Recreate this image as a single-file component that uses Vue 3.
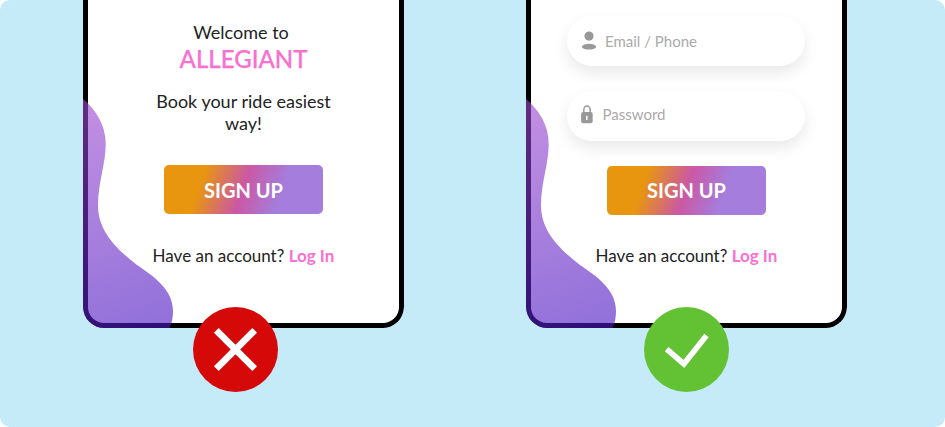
<script setup>
const phones = [
  { id: 'before', form: false, good: false },
  { id: 'after', form: true, good: true },
]
</script>

<template>
  <main class="board">
    <section v-for="phone in phones" :key="phone.id" class="column" :class="phone.id">
      <div class="phone">
        <div class="screen">
          <div v-if="!phone.form" class="intro">
            <p class="welcome">Welcome to</p>
            <h1 class="brand">ALLEGIANT</h1>
            <p class="tagline">Book your ride easiest<br />way!</p>
          </div>
          <div v-else class="fields">
            <div class="field email">
              <svg width="16" height="20" viewBox="0 0 16 20" fill="#999">
                <circle cx="8" cy="5.1" r="4.6" />
                <ellipse cx="8" cy="15.7" rx="7.2" ry="2.9" />
              </svg>
              <span>Email / Phone</span>
            </div>
            <div class="field password">
              <svg width="12" height="20" viewBox="0 0 12 20">
                <path d="M2.8 8V5a3.2 3.9 0 0 1 6.4 0V8" fill="none" stroke="#999" stroke-width="1.5" />
                <rect x="0.1" y="7" width="11.6" height="11.2" rx="2" fill="#999" />
                <path d="M5.1 10.8h1.5v4.2H5.1z" fill="#fff" />
              </svg>
              <span>Password</span>
            </div>
          </div>
          <button class="signup">SIGN UP</button>
          <p class="login">Have an account? <a>Log In</a></p>
        </div>
        <svg class="wave" width="92" height="230" viewBox="0 0 92 230">
          <defs>
            <linearGradient :id="'wave-' + phone.id" gradientUnits="userSpaceOnUse" x1="0" y1="10" x2="70" y2="230">
              <stop offset="0" stop-color="#9b48d0" />
              <stop offset="1" stop-color="#4c18c2" />
            </linearGradient>
          </defs>
          <path
            d="M0 1C13 12 22.7 27 22.7 46C22.7 66 15 85 15 107C15 132 31 149 54 167C70 178 90 191 90 213C90 219 89 225 86.5 230H0Z"
            :fill="'url(#wave-' + phone.id + ')'"
            fill-opacity="0.615"
          />
        </svg>
      </div>
      <svg class="badge" width="85" height="85" viewBox="0 0 85 85">
        <circle cx="42.5" cy="42.5" r="42.5" :fill="phone.good ? '#62c234' : '#d60909'" />
        <path v-if="phone.good" d="M22.7 42.2L39.9 57L62.5 28.6" fill="none" stroke="#fff" stroke-width="5.7" />
        <path v-else d="M23.3 23.3L61.7 61.7M61.7 23.3L23.3 61.7" fill="none" stroke="#fff" stroke-width="6.8" />
      </svg>
    </section>
  </main>
</template>

<style>
body {
  background: #fff;
}
</style>

<style scoped>
.board {
  box-sizing: border-box;
  width: 945px;
  height: 427px;
  padding-left: 83px;
  display: flex;
  gap: 122px;
  background: #c5eaf8;
  border-radius: 10px;
  overflow: hidden;
  font-family: Lato, sans-serif;
  color: #222;
}
.column {
  position: relative;
  width: 321px;
}
.phone {
  position: relative;
  height: 328px;
  overflow: hidden;
  border-radius: 0 0 21px 21px;
}
.screen {
  box-sizing: border-box;
  height: 328px;
  border: 5px solid #000;
  border-top: 0;
  border-radius: 0 0 21px 21px;
  background: #fff;
  display: flex;
  flex-direction: column;
  align-items: center;
}
p,
h1 {
  margin: 0;
}
.intro {
  box-sizing: border-box;
  height: 165px;
  padding-top: 21px;
  text-align: center;
}
.welcome {
  font-size: 18px;
  line-height: 22px;
  padding-right: 5px;
}
.brand {
  margin-top: 1px;
  font-size: 24px;
  line-height: 30px;
  font-weight: 500;
  color: #f870d2;
  -webkit-text-stroke: 0.25px #f870d2;
}
.tagline {
  margin-top: 16px;
  font-size: 18px;
  line-height: 22px;
}
.fields {
  box-sizing: border-box;
  height: 166px;
  padding: 16px 2px 0 0;
  display: flex;
  flex-direction: column;
  gap: 25px;
}
.field {
  box-sizing: border-box;
  width: 238px;
  height: 50px;
  border-radius: 25px;
  background: #fff;
  box-shadow: 0 7px 15px rgba(0, 0, 0, 0.09);
  display: flex;
  align-items: center;
  font-size: 15px;
  line-height: 20px;
  color: #aaa;
}
.email {
  padding: 0 0 0 14px;
  gap: 8.5px;
}
.password {
  padding: 0 0 3px 14px;
  gap: 10px;
}
.password span {
  padding-bottom: 1px;
}
.signup {
  width: 159px;
  height: 49px;
  padding: 0;
  border: 0;
  border-radius: 5px;
  background: linear-gradient(109deg, #e8960f 24%, #cb58a4 49.5%, #a47ddd 72%);
  font: bold 20px/49px Lato, sans-serif;
  color: #fff;
}
.before .signup {
  line-height: 51px;
}
.login {
  margin-top: 31px;
  font-size: 17px;
  line-height: 22px;
}
.after .login {
  margin-top: 30px;
}
.login a {
  font-weight: bold;
  color: #f870d2;
}
.wave {
  position: absolute;
  left: 0;
  top: 98px;
}
.badge {
  position: absolute;
  left: 110px;
  top: 307px;
}
.after .badge {
  left: 118px;
}
</style>
